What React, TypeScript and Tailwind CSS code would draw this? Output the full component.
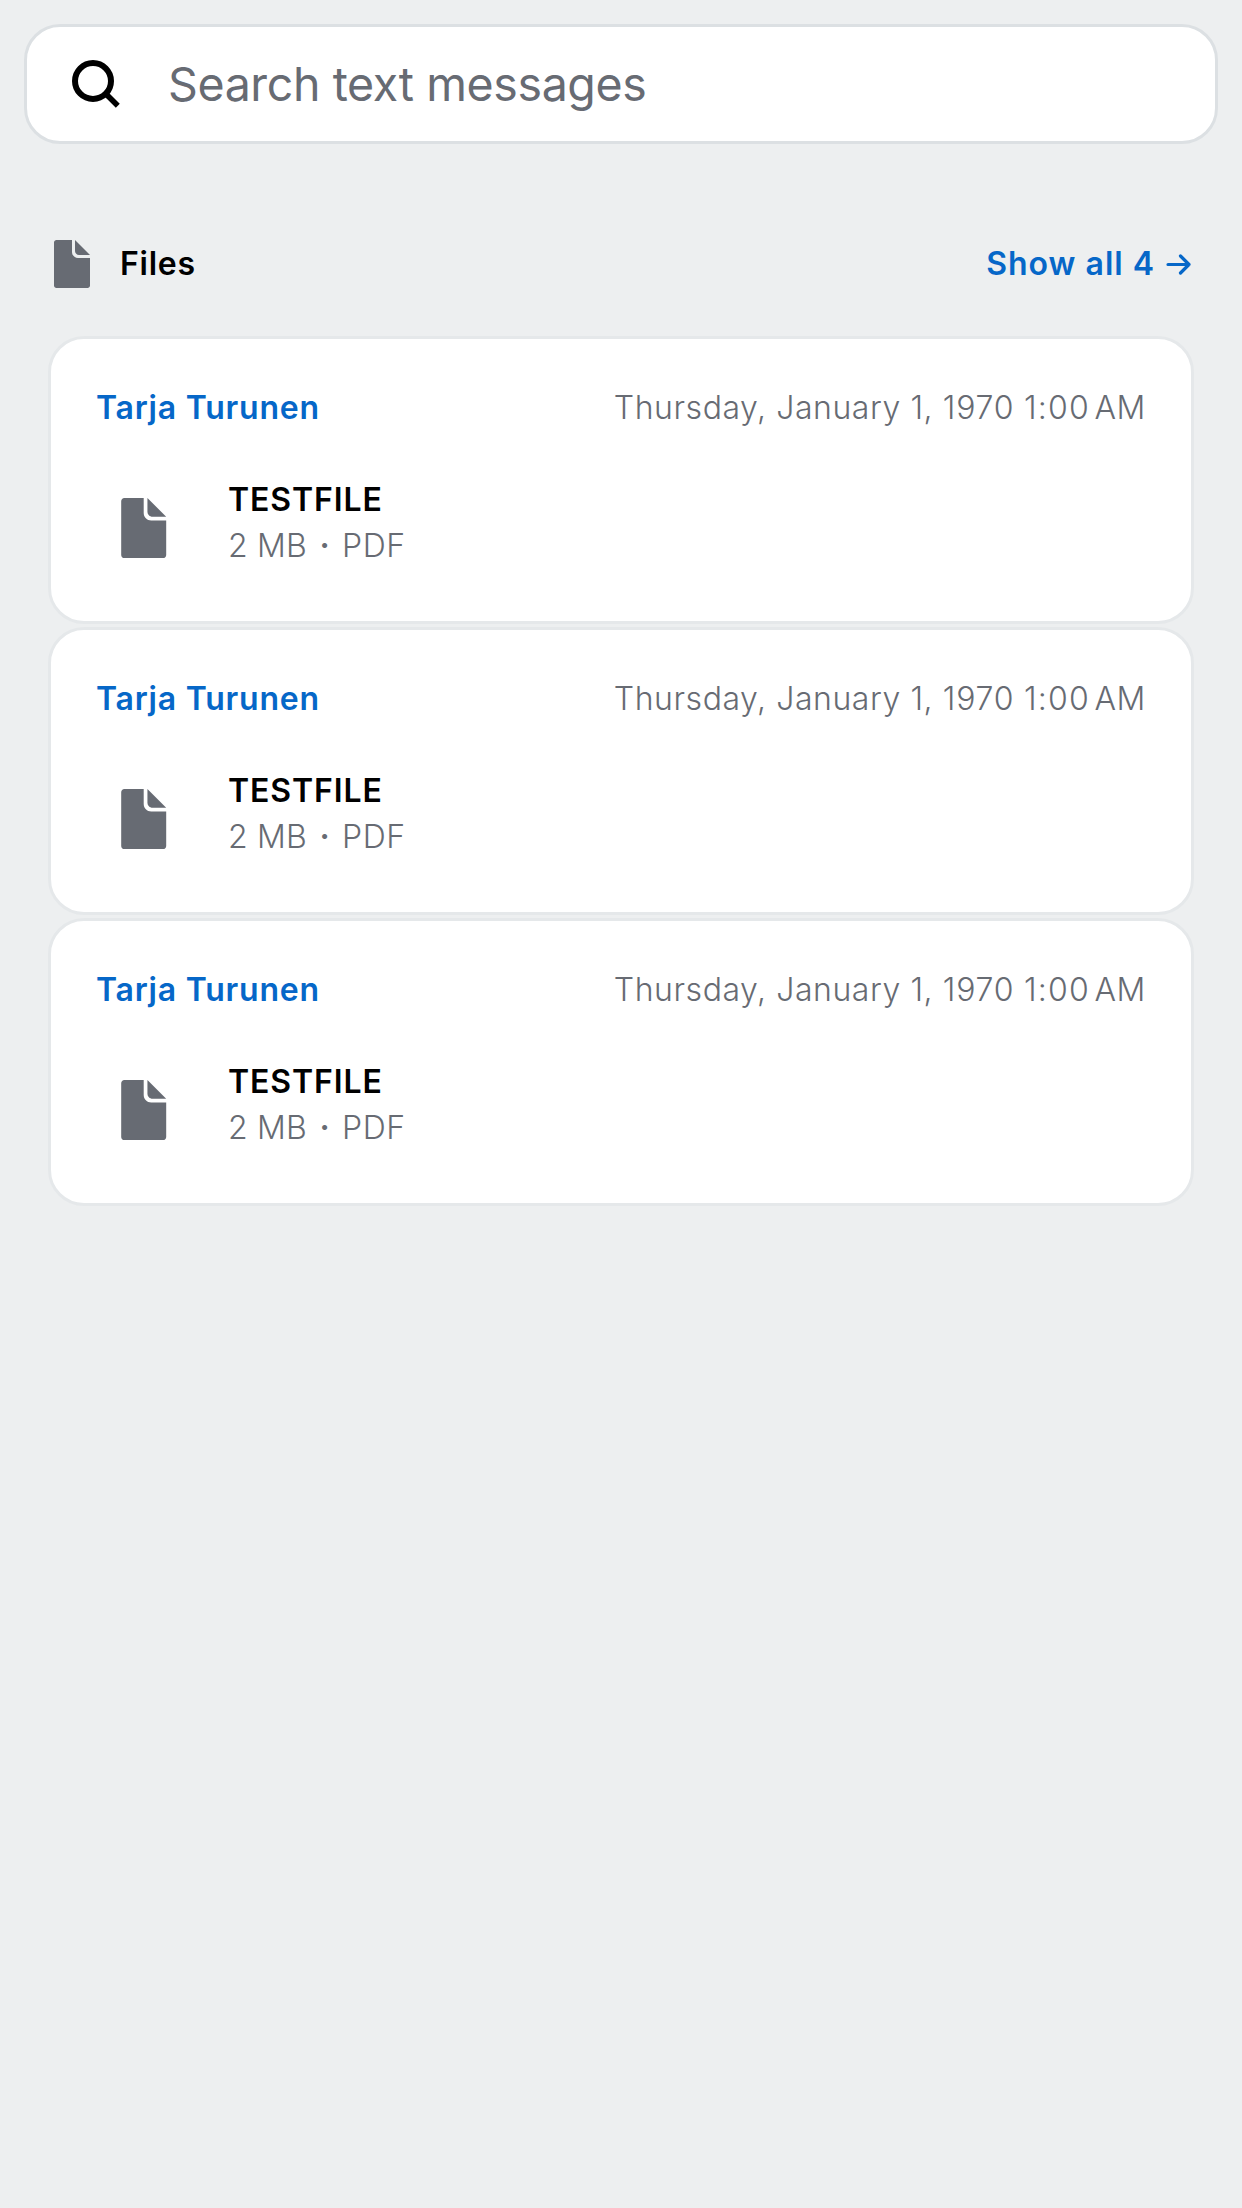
const messages = [
  { id: 1, sender: 'Tarja Turunen', name: 'TESTFILE', size: '2 MB', type: 'PDF' },
  { id: 2, sender: 'Tarja Turunen', name: 'TESTFILE', size: '2 MB', type: 'PDF' },
  { id: 3, sender: 'Tarja Turunen', name: 'TESTFILE', size: '2 MB', type: 'PDF' },
];

function FileIcon({ className }: { className: string }) {
  return (
    <svg viewBox="0 0 36 48" className={className} fill="currentColor" aria-hidden="true">
      <path d="M2.5 0H18V12C18 15.3 20.7 18 24 18H36V45.5C36 46.9 34.9 48 33.5 48H2.5C1.1 48 0 46.9 0 45.5V2.5C0 1.1 1.1 0 2.5 0Z" />
      <path d="M21 0L36 15H25C22.8 15 21 13.2 21 11Z" />
    </svg>
  );
}

function SearchBar() {
  return (
    <div className="flex h-[120px] items-center rounded-[36px] border-[3px] border-[#dce0e3] bg-white pl-[45px]">
      <svg viewBox="0 0 48 48" className="size-12 shrink-0" fill="none" stroke="#000" aria-hidden="true">
        <circle cx="21" cy="21" r="18" strokeWidth="6" />
        <path d="M33 33L45.8 45.8" strokeWidth="5.6" />
      </svg>
      <span className="ml-12 text-[46.5px] leading-[60px] tracking-[-0.38px] whitespace-nowrap text-[#676b73]">
        Search text messages
      </span>
    </div>
  );
}

function FileCard({ sender, name, size, type }: { sender: string; name: string; size: string; type: string }) {
  return (
    <article className="h-[288px] rounded-[36px] border-[3px] border-[#e5e8ea] bg-white p-[45px]">
      <div className="flex h-12 justify-between leading-[48px] whitespace-nowrap">
        <span className="font-semibold tracking-[0.76px] text-[#0667c8]">{sender}</span>
        <span className="font-light tracking-[0.56px] text-[#676b73]">
          Thursday, January 1, <span className="tracking-[0.8px]">1970</span> <span className="tracking-[1.2px]">1:00</span>
          <span className="tracking-[-1.2px]">{'\u202f'}</span>AM
        </span>
      </div>
      <div className="mt-12 flex h-24">
        <div className="flex size-24 items-center justify-center text-[#676b73]">
          <FileIcon className="h-[60px] w-[45.4px]" />
        </div>
        <div className="-mt-[3px] ml-9 leading-[46px]">
          <div className="font-semibold tracking-[0.9px] text-black">{name}</div>
          <div className="flex items-center font-light tracking-[0.2px] text-[#676b73]">
            <span>{size}</span>
            <span className="w-[35px] text-center font-semibold tracking-normal">·</span>
            <span className="tracking-[0.6px]">{type}</span>
          </div>
        </div>
      </div>
    </article>
  );
}

export default function App() {
  return (
    <main className="min-h-screen bg-[#edeff0] p-6 font-['Inter',sans-serif] text-[32px]">
      <SearchBar />
      <section className="px-6 pt-[90px]">
        <header className="flex h-[60px] items-center justify-between pr-[3px] pl-1.5 leading-[48px] font-semibold">
          <h2 className="flex items-center text-black">
            <FileIcon className="h-12 w-9 text-[#676b73]" />
            <span className="ml-[30px] tracking-[0.75px]">Files</span>
          </h2>
          <a className="flex items-center text-[#0667c8]">
            <span className="tracking-[1px]">Show all 4</span>
            <svg viewBox="0 0 25 21" className="ml-[11px] h-[21px] w-[25px]" fill="none" stroke="currentColor" strokeWidth="3.2" strokeLinecap="round" strokeLinejoin="round" aria-hidden="true">
              <path d="M2 10.5H23M14.5 2L23 10.5L14.5 19" />
            </svg>
          </a>
        </header>
        <div className="mt-[42px] flex flex-col gap-[3px]">
          {messages.map(({ id, ...message }) => (
            <FileCard key={id} {...message} />
          ))}
        </div>
      </section>
    </main>
  );
}
